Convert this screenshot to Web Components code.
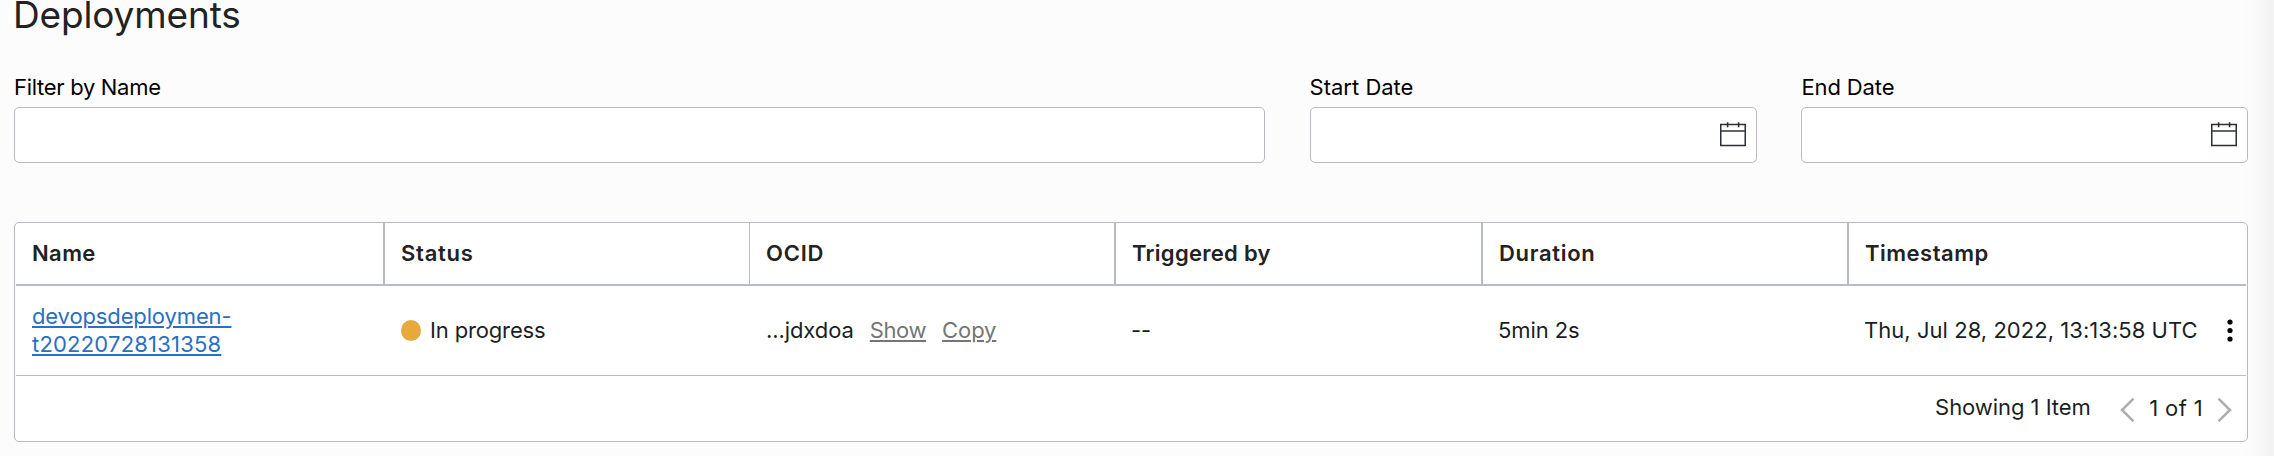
<!DOCTYPE html>
<html lang="en"><head><meta charset="utf-8"><title>Deployments</title>
<style>
html{background:#fcfcfc}
body{margin:0;height:456px;background:linear-gradient(90deg,rgba(0,0,0,0) 2240px,rgba(0,0,0,.012) 2256px,rgba(0,0,0,.04) 2274px);color:#1b1f24;font:400 22px/28px Inter,sans-serif}
</style></head><body>
<deployments-page></deployments-page>
<script>
const define = (name, css, html) => customElements.define(name, class extends HTMLElement {
  connectedCallback() {
    if (this.shadowRoot) return;
    const t = document.createElement('template');
    t.innerHTML = `<style>${css}</style>${html}`;
    this.attachShadow({ mode: 'open' }).append(t.content.cloneNode(true));
  }
});

define('page-title', `:host{display:block}h1{margin:0 0 0 -1px;font-size:37px;line-height:30px;font-weight:400;letter-spacing:-.15px;color:#222}`, `<h1><slot></slot></h1>`);

define('calendar-icon', `:host{display:block;width:26px;height:26px}svg{display:block}`,
`<svg width="26" height="26" viewBox="0 0 26 26" fill="none" stroke="#2b3036"><path d="M.75 2.4h24.5v21.2H.75z" stroke-width="1.5"/><path d="M1 9h24" stroke-width="1.8" stroke="#50545a"/><path d="M7.6.2v5M18.6.2v5" stroke-width="1.6"/></svg>`);

define('form-field', `:host{display:block;color:#000}label{display:block;margin:0 0 6px;letter-spacing:var(--track,0)}
.box{display:flex;align-items:center;justify-content:flex-end;box-sizing:border-box;height:56px;padding:0 10px 0 12px;border:1px solid #b8bbc3;border-radius:5px;background:#fff}`,
`<label><slot></slot></label><div class="box"><slot name="icon"></slot></div>`);

define('filter-bar', `:host{display:grid;grid-template-columns:1250.8px 447px 1fr;column-gap:44.8px;margin-top:43px}`, `<slot></slot>`);

define('table-row', `:host{display:grid;grid-template-columns:369px 365px 366px 367px 366px 1fr;margin:0 1px;box-sizing:border-box;height:90px;border-bottom:1px solid #b8bbc3}
:host([header]){height:63px;border-bottom:2px solid #b8bbc3;font-weight:600;color:#222}`, `<slot></slot>`);

define('table-cell', `:host{display:flex;align-items:center;padding:0 0 1px 16px;min-width:0;letter-spacing:var(--track,0)}
:host([divider]){border-right:2px solid #b8bbc3}:host([divider=thin]){border-right-width:1px}`, `<slot></slot>`);

define('text-link', `:host{display:inline-block}a{color:inherit;text-decoration:underline;text-decoration-thickness:2px;text-underline-offset:2px;text-decoration-skip-ink:auto}`, `<a><slot></slot></a>`);

define('status-label', `:host{display:flex;align-items:center;gap:9px}i{width:20px;height:21px;margin-top:1px;border-radius:50%;background:#e8a93c}span{letter-spacing:-.15px}`, `<i></i><span><slot></slot></span>`);

define('row-menu', `:host{display:block;margin:1px 13px 0 auto}svg{display:block}`,
`<svg width="6" height="24" viewBox="0 0 6 24" fill="#000"><circle cx="3" cy="3" r="2.6"/><circle cx="3" cy="11.5" r="2.6"/><circle cx="3" cy="20" r="2.6"/></svg>`);

define('table-pager', `:host{display:flex;align-items:center;box-sizing:border-box;height:65px;padding:0 15px 1px 0;justify-content:flex-end}
.count{margin:-2px 29.5px 0 0;letter-spacing:-.05px}.pos{margin:0 14px;letter-spacing:.35px}svg{display:block;margin-top:4px}`,
`<span class="count"><slot></slot></span>
<svg width="15" height="26" viewBox="0 0 15 26" fill="none" stroke="#adadad" stroke-width="2.5"><path d="M13.6 1.6 2 13l11.6 11.4"/></svg>
<span class="pos"><slot name="position"></slot></span>
<svg width="15" height="26" viewBox="0 0 15 26" fill="none" stroke="#adadad" stroke-width="2.5"><path d="M1.4 1.6 13 13 1.4 24.4"/></svg>`);

define('data-table', `:host{display:block;margin-top:59px;box-sizing:border-box;height:220px;border:1px solid #b8bbc3;border-radius:5px;background:#fff}`, `<slot></slot>`);

define('deployments-page', `:host{display:block;box-sizing:border-box;width:2248px;padding-left:14px}
.name{color:#2a6fc5}.name text-link{display:block}.muted{color:#757575}`,
`<page-title>Deployments</page-title>
<filter-bar>
  <form-field style="--track:-.3px">Filter by Name</form-field>
  <form-field>Start Date<calendar-icon slot="icon"></calendar-icon></form-field>
  <form-field style="--track:-.11px">End Date<calendar-icon slot="icon"></calendar-icon></form-field>
</filter-bar>
<data-table>
  <table-row header>
    <table-cell divider style="--track:.4px">Name</table-cell>
    <table-cell divider="thin" style="--track:.75px">Status</table-cell>
    <table-cell divider style="--track:.8px">OCID</table-cell>
    <table-cell divider style="--track:.29px">Triggered by</table-cell>
    <table-cell divider style="--track:.7px">Duration</table-cell>
    <table-cell style="--track:.5px">Timestamp</table-cell>
  </table-row>
  <table-row>
    <table-cell><div class="name"><text-link style="letter-spacing:-.13px">devopsdeploymen-</text-link><text-link style="letter-spacing:.2px">t20220728131358</text-link></div></table-cell>
    <table-cell><status-label>In progress</status-label></table-cell>
    <table-cell style="--track:-.09px">...jdxdoa<text-link class="muted" style="margin-left:16px;letter-spacing:-.4px">Show</text-link><text-link class="muted" style="margin-left:16px;letter-spacing:-.1px">Copy</text-link></table-cell>
    <table-cell style="padding-left:15px">--</table-cell>
    <table-cell style="--track:-.1px;padding-left:15px">5min 2s</table-cell>
    <table-cell style="--track:.04px;padding-left:15px">Thu, Jul 28, 2022, 13:13:58 UTC<row-menu></row-menu></table-cell>
  </table-row>
  <table-pager>Showing 1 Item<span slot="position">1 of 1</span></table-pager>
</data-table>`);
</script></body></html>
